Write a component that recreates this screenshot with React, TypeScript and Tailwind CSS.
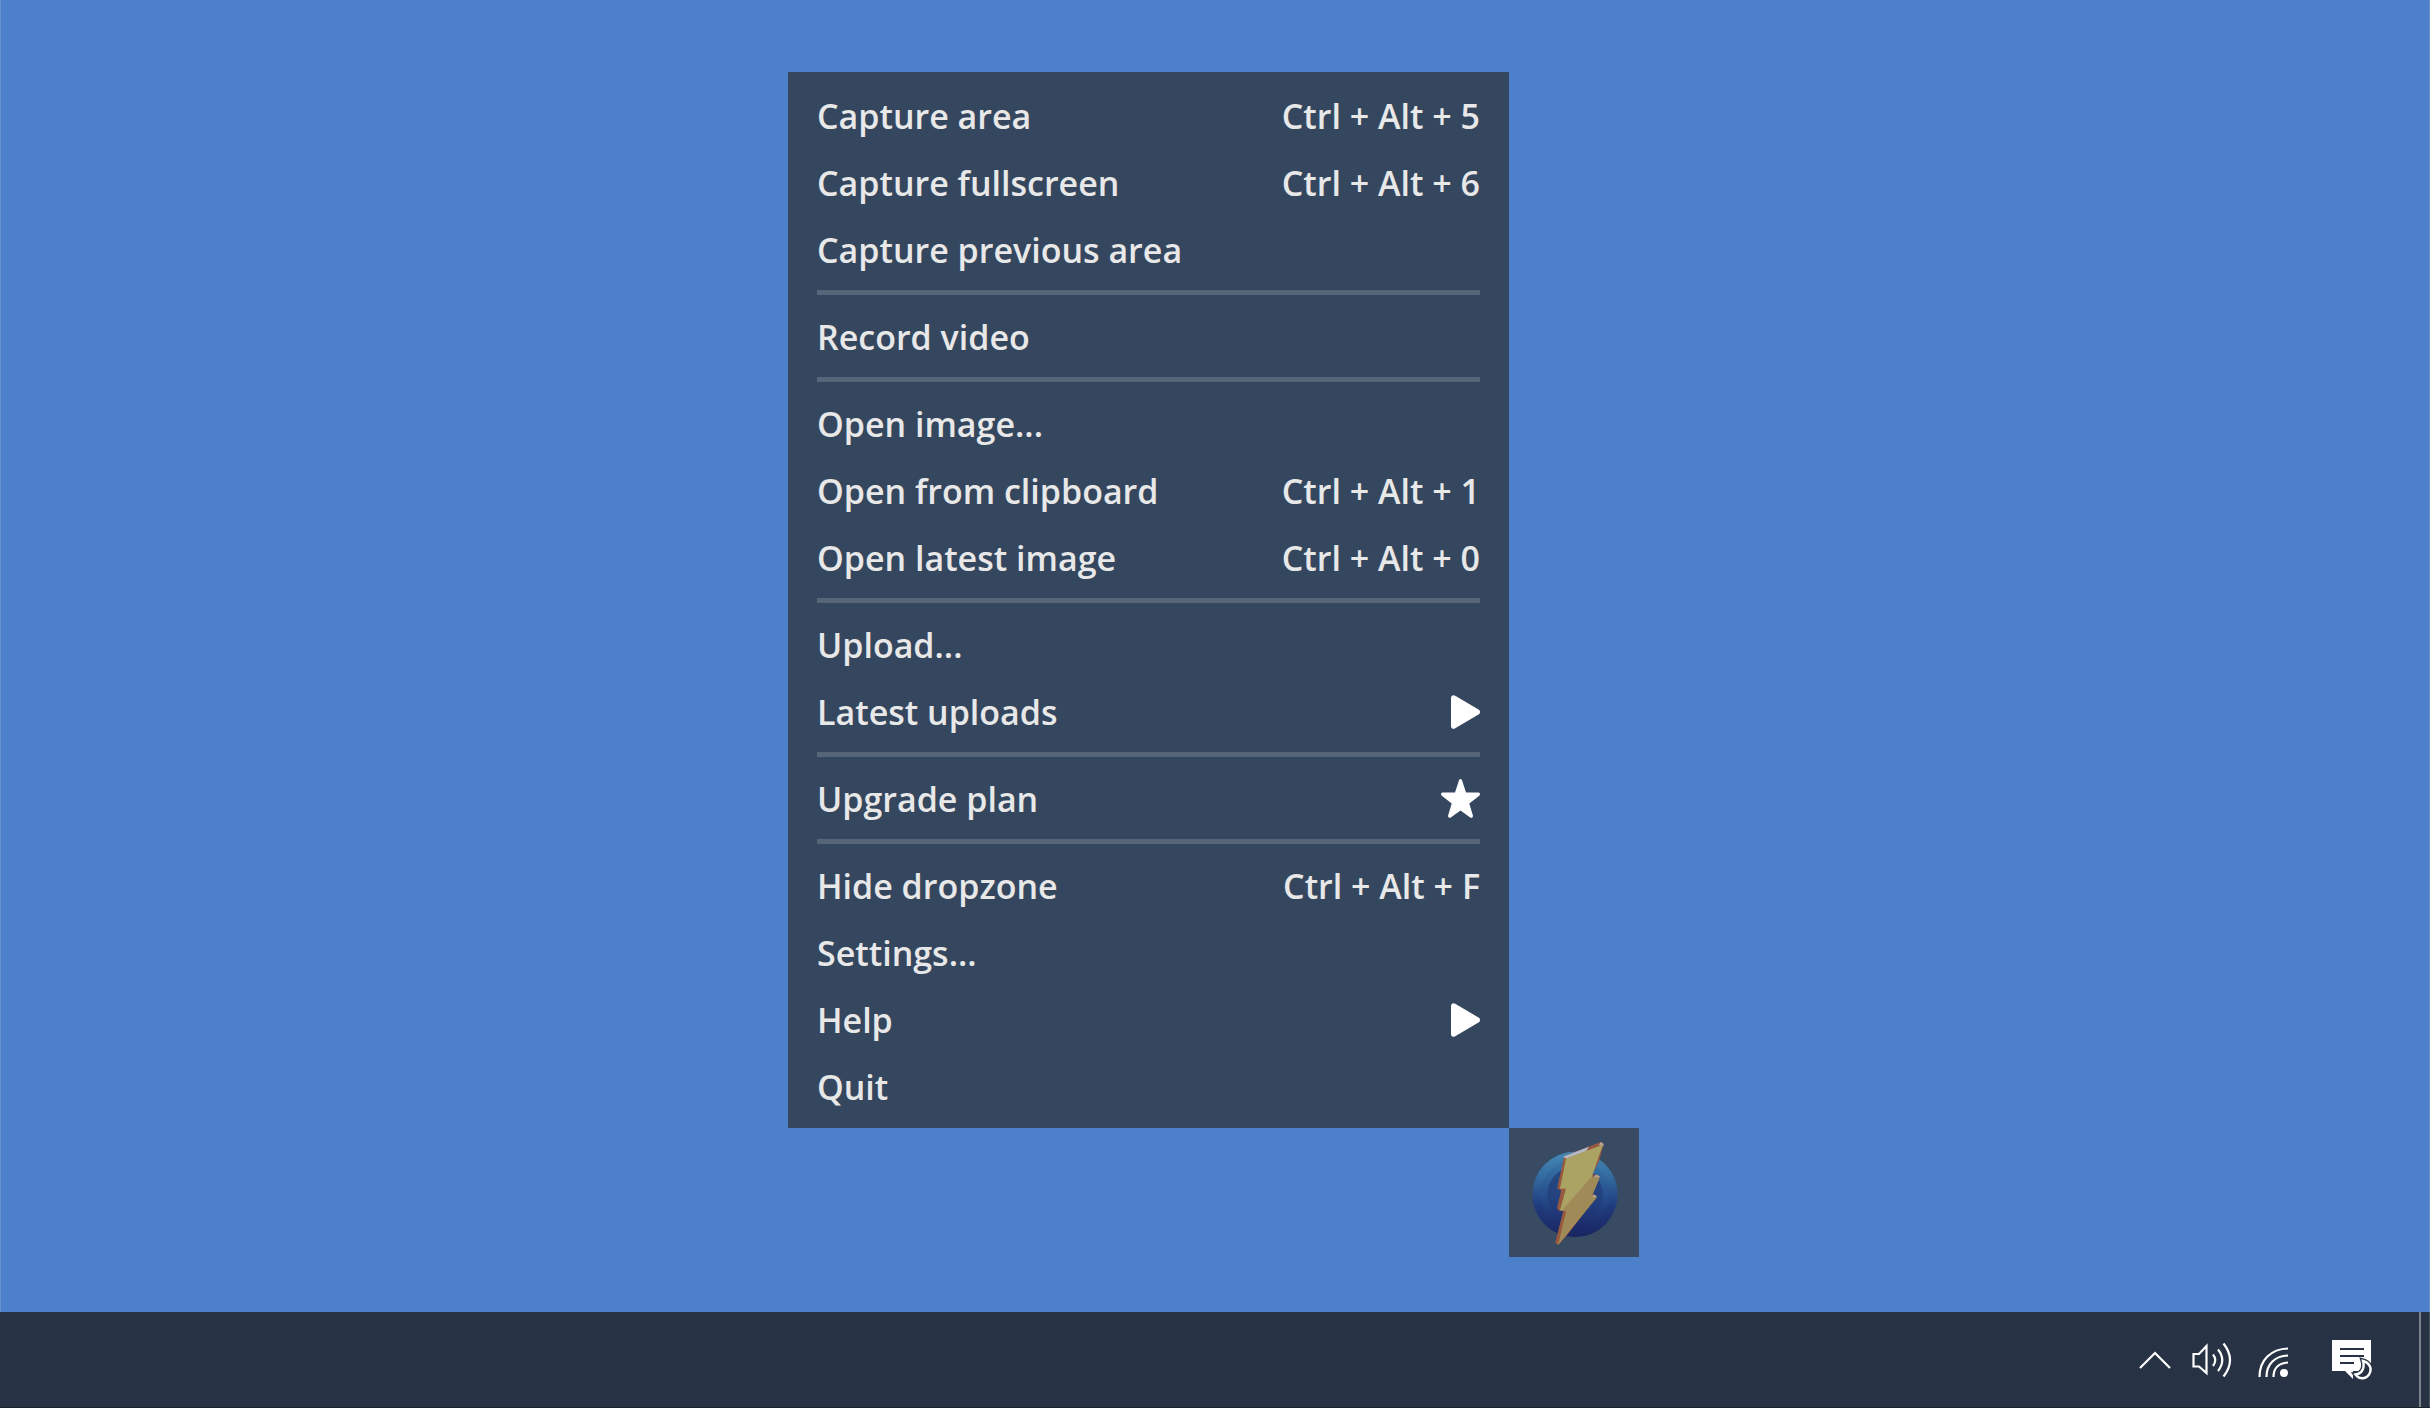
import { Fragment } from 'react';
import type { ReactNode } from 'react';

type MenuEntry = {
  label: string;
  shortcut?: string;
  icon?: ReactNode;
};

function PlayIcon() {
  return (
    <svg width="29" height="34" viewBox="0 0 29 34" fill="#fff" aria-hidden="true">
      <path d="M0 3C0 .6 2-.6 4.200.7L27.500 14.500C29.500 15.700 29.500 18.300 27.500 19.500L4.200 33.300C2 34.600 0 33.400 0 31Z" />
    </svg>
  );
}

function StarIcon() {
  return (
    <svg width="39" height="39" viewBox="0 0 39 39" fill="#fff" aria-hidden="true">
      <path d="M18 1.200C18.600-.3 20.400-.3 21 1.200L25 13.500L37.500 13.600C39.200 13.800 39.500 15.700 38.200 16.700L28.300 24.500L31.900 36.600C32.200 38.400 30.600 39.400 29.200 38.500L19.500 31.600L9.800 38.500C8.400 39.400 6.800 38.400 7.100 36.600L10.700 24.500L.8 16.700C-.5 15.700-.2 13.800 1.500 13.600L14 13.500Z" />
    </svg>
  );
}

const sections: MenuEntry[][] = [
  [
    { label: 'Capture area', shortcut: 'Ctrl + Alt + 5' },
    { label: 'Capture fullscreen', shortcut: 'Ctrl + Alt + 6' },
    { label: 'Capture previous area' },
  ],
  [{ label: 'Record video' }],
  [
    { label: 'Open image...' },
    { label: 'Open from clipboard', shortcut: 'Ctrl + Alt + 1' },
    { label: 'Open latest image', shortcut: 'Ctrl + Alt + 0' },
  ],
  [{ label: 'Upload...' }, { label: 'Latest uploads', icon: <PlayIcon /> }],
  [{ label: 'Upgrade plan', icon: <StarIcon /> }],
  [
    { label: 'Hide dropzone', shortcut: 'Ctrl + Alt + F' },
    { label: 'Settings...' },
    { label: 'Help', icon: <PlayIcon /> },
    { label: 'Quit' },
  ],
];

function TrayMenu() {
  return (
    <nav aria-label="Tray menu" className="bg-[#35475e] px-[29px] pt-[10px] pb-2">
      {sections.map((entries, i) => (
        <Fragment key={i}>
          {i > 0 && <hr className="mt-[7px] mb-2 h-[5px] border-0 bg-[#576578]" />}
          {entries.map((entry) => (
            <button
              key={entry.label}
              type="button"
              className="flex h-[67px] w-full items-center justify-between text-left text-[34px] leading-[67px] font-semibold text-[#e8e8e8]"
            >
              <span className="pt-0.5">{entry.label}</span>
              {entry.shortcut && <span className="pt-0.5">{entry.shortcut}</span>}
              {entry.icon}
            </button>
          ))}
        </Fragment>
      ))}
    </nav>
  );
}

function BoltLogo() {
  return (
    <svg className="size-full" viewBox="0 0 130 130" aria-hidden="true">
      <defs>
        <linearGradient id="orb" x1="0" y1="0" x2="0" y2="1">
          <stop offset="0" stopColor="#4489b5" />
          <stop offset="0.3" stopColor="#336a9f" />
          <stop offset="0.65" stopColor="#1f3a7c" />
          <stop offset="1" stopColor="#192561" />
        </linearGradient>
        <linearGradient id="ring" x1="0" y1="0" x2="0" y2="1">
          <stop offset="0" stopColor="#3a78a9" />
          <stop offset="0.5" stopColor="#26508e" />
          <stop offset="1" stopColor="#1a2666" />
        </linearGradient>
        <linearGradient id="core" x1="0" y1="0" x2="0" y2="1">
          <stop offset="0" stopColor="#234a80" />
          <stop offset="0.6" stopColor="#24417f" />
          <stop offset="1" stopColor="#1e2f70" />
        </linearGradient>
      </defs>
      <circle cx="66" cy="67" r="43" fill="url(#orb)" />
      <circle cx="66" cy="67" r="35" fill="url(#ring)" />
      <circle cx="66" cy="67" r="28" fill="url(#core)" />
      {/* side faces of the bolt */}
      <path d="M55 29L56 28L92 14L95 16L90 34L83 47L88 47L91 49L84 66L88 69L58 108L49 118L46 116L54 84L49 83L48 80L52 63L48 61Z" fill="#96583f" />
      <path d="M54 29L80 19L77 24L57 31Z" fill="#b3bac4" />
      <path d="M92 14L95 16L94 19L90 17ZM88 47L91 49L89 52L85 49ZM85 67L88 69L86 72L82 70Z" fill="#b9a69c" />
      {/* front face */}
      <path d="M57 31L94 17L83 49L91 50L83 69L88 70L49 118L57 84L51 83L57 61L51 61Z" fill="#a08a57" />
      <path d="M57 31L94 17L83 49L53 83L51 83L57 61L51 61Z" fill="#aaa363" />
    </svg>
  );
}

function ChevronIcon() {
  return (
    <svg width="32" height="18" viewBox="0 0 32 18" fill="none" stroke="#fff" strokeWidth="2.2" aria-hidden="true">
      <path d="M1 17L16 2L31 17" />
    </svg>
  );
}

function SpeakerIcon() {
  return (
    <svg width="40" height="36" viewBox="0 0 40 36" fill="none" stroke="#fff" strokeWidth="2.2" aria-hidden="true">
      <path d="M1.500 12H7L14.500 4V31L7 24.500H1.500Z" />
      <path d="M21 12.500Q25.500 18 21 24M26 7.500Q34.500 18 26 29M31.500 1.500Q44.500 18 31.500 34.500" />
    </svg>
  );
}

function WifiIcon() {
  return (
    <svg width="30" height="30" viewBox="0 0 30 30" fill="none" stroke="#fff" strokeWidth="2.2" aria-hidden="true">
      <path d="M1.500 30C1.500 13 13 2 30 1.500M8.500 30C8.500 17 17 9 30 8.500M15.500 30C15.500 21 21 16 30 15.500" />
      <circle cx="26" cy="26" r="4" fill="#fff" stroke="none" />
    </svg>
  );
}

function NotificationIcon() {
  return (
    <svg width="40" height="40" viewBox="0 0 40 40" aria-hidden="true">
      <path d="M0 0H39V31H21V39L13 31H0Z" fill="#fff" />
      <path d="M8 9H32M8 16H32M8 23H22" stroke="#273344" strokeWidth="2.2" />
      <path d="M31 21C38 23 40.500 29 37 34.500C33.500 39.500 27 39.500 23.500 34.500C30 34 33 28 31 21Z" fill="#273344" stroke="#273344" strokeWidth="5" />
      <path d="M31 21C38 23 40.500 29 37 34.500C33.500 39.500 27 39.500 23.500 34.500C30 34 33 28 31 21Z" fill="#273344" stroke="#fff" strokeWidth="2.4" />
    </svg>
  );
}

function Taskbar() {
  return (
    <footer className="flex h-24 items-stretch justify-end border-b border-[#1c2028] bg-[#273344]">
      <div className="flex items-center">
        <button type="button" aria-label="Show hidden icons" className="mr-[21px]">
          <ChevronIcon />
        </button>
        <button type="button" aria-label="Volume" className="mr-[26px]">
          <SpeakerIcon />
        </button>
        <button type="button" aria-label="Network" className="mr-[44px] pt-1">
          <WifiIcon />
        </button>
        <button type="button" aria-label="Notifications" className="mr-[47px]">
          <NotificationIcon />
        </button>
      </div>
      <button type="button" aria-label="Show desktop" className="w-[11px] border-r border-l-2 border-r-[#4a5563] border-l-[#7b818c]" />
    </footer>
  );
}

export default function App() {
  return (
    <div className="flex min-h-screen flex-col bg-[#4d80ca] font-['Open_Sans',sans-serif]">
      <main className="flex flex-1 justify-center border-x border-[#6690cf] pt-[72px] pr-[3px] pb-[54px]">
        <div className="grid grid-cols-[721px_130px] content-start">
          <TrayMenu />
          <div className="col-start-2 row-start-2 h-[129px] bg-[#394b63]">
            <BoltLogo />
          </div>
        </div>
      </main>
      <Taskbar />
    </div>
  );
}
